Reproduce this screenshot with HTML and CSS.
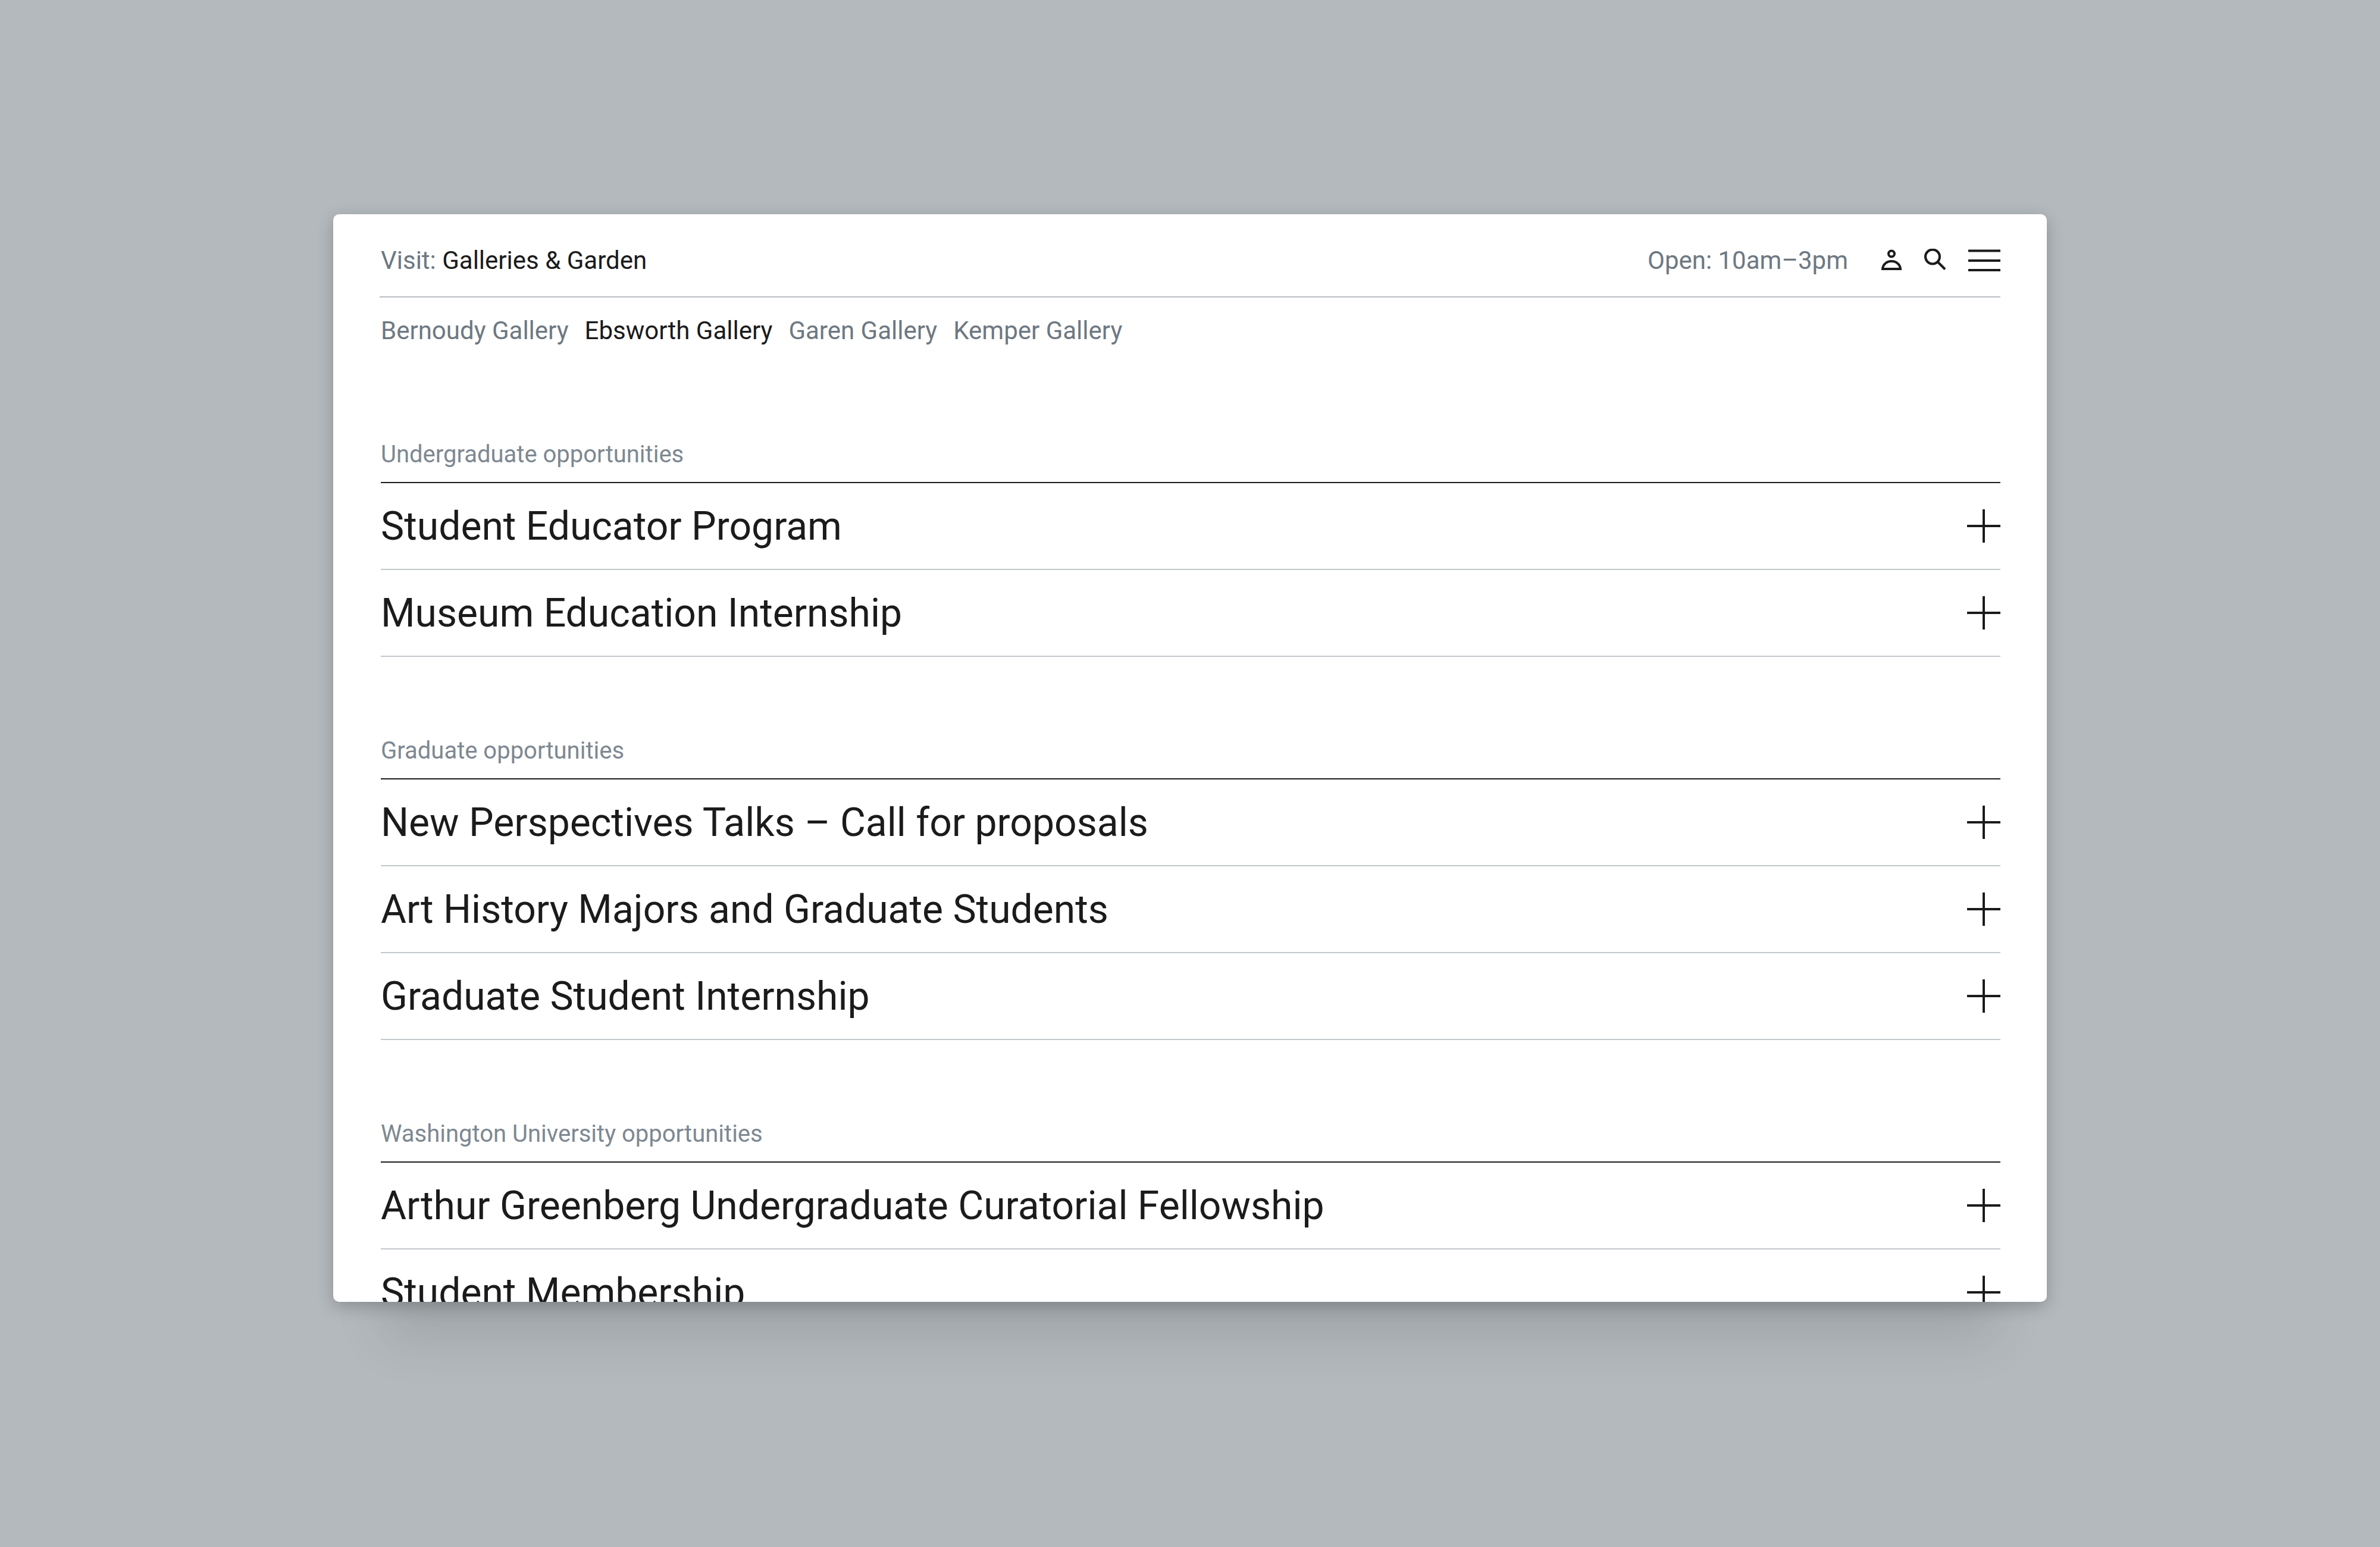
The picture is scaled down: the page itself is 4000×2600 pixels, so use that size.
FILE: index.html
```html
<!DOCTYPE html>
<html lang="en">
<head>
<meta charset="utf-8">
<title>Galleries &amp; Garden</title>
<link rel="stylesheet" href="styles.css">
</head>
<body>
<div class="page">
  <header class="header">
    <div class="topbar">
      <p class="visit"><span class="muted">Visit:</span> <a class="link" href="#galleries">Galleries &amp; Garden</a></p>
      <div class="tools">
        <p class="hours muted">Open: 10am–3pm</p>
        <button class="icon-button" type="button" aria-label="Account">
          <svg width="36" height="40" viewBox="0 0 36 40" fill="none" stroke="currentColor" stroke-width="4">
            <circle cx="17" cy="8.500" r="5"/>
            <path d="M2 34C2.500 26.500 9 21 17 21s14.500 5.500 15 13z"/>
          </svg>
        </button>
        <button class="icon-button" type="button" aria-label="Search">
          <svg width="38" height="40" viewBox="0 0 38 40" fill="none" stroke="currentColor" stroke-width="4">
            <circle cx="14" cy="13.500" r="12"/>
            <path d="M22.500 22 35 34.500"/>
          </svg>
        </button>
        <button class="icon-button" type="button" aria-label="Menu">
          <svg width="54" height="40" viewBox="0 0 54 40" fill="none" stroke="currentColor" stroke-width="4">
            <path d="M0 3.500h54M0 20h54M0 36h54"/>
          </svg>
        </button>
      </div>
    </div>
    <nav class="galleries" id="galleries">
      <a class="link muted" href="#bernoudy">Bernoudy Gallery</a>
      <a class="link" href="#ebsworth" aria-current="page">Ebsworth Gallery</a>
      <a class="link muted" href="#garen">Garen Gallery</a>
      <a class="link muted" href="#kemper">Kemper Gallery</a>
    </nav>
  </header>
  <main class="content">
    <section class="group">
      <h2 class="group-title">Undergraduate opportunities</h2>
      <ul class="list">
        <li><button class="row" type="button" aria-expanded="false"><span class="row-title">Student Educator Program</span><span class="plus"></span></button></li>
        <li><button class="row" type="button" aria-expanded="false"><span class="row-title">Museum Education Internship</span><span class="plus"></span></button></li>
      </ul>
    </section>
    <section class="group">
      <h2 class="group-title">Graduate opportunities</h2>
      <ul class="list">
        <li><button class="row" type="button" aria-expanded="false"><span class="row-title">New Perspectives Talks – Call for proposals</span><span class="plus"></span></button></li>
        <li><button class="row" type="button" aria-expanded="false"><span class="row-title">Art History Majors and Graduate Students</span><span class="plus"></span></button></li>
        <li><button class="row" type="button" aria-expanded="false"><span class="row-title">Graduate Student Internship</span><span class="plus"></span></button></li>
      </ul>
    </section>
    <section class="group">
      <h2 class="group-title">Washington University opportunities</h2>
      <ul class="list">
        <li><button class="row" type="button" aria-expanded="false"><span class="row-title">Arthur Greenberg Undergraduate Curatorial Fellowship</span><span class="plus"></span></button></li>
        <li><button class="row" type="button" aria-expanded="false"><span class="row-title">Student Membership</span><span class="plus"></span></button></li>
      </ul>
    </section>
  </main>
</div>
</body>
</html>
```
FILE: styles.css
```css
* {
  box-sizing: border-box;
  margin: 0;
  padding: 0;
}

body {
  display: flex;
  justify-content: center;
  height: 100vh;
  padding: 360px 0 412px;
  overflow: hidden;
  background: #b4b9bd;
  color: #1b1b1b;
  font-family: Roboto, "Liberation Sans", sans-serif;
  font-size: 42px;
  line-height: 48px;
}

.page {
  width: 72%;
  overflow: hidden;
  border-radius: 10px;
  background: #fff;
  box-shadow:
    0 8px 28px rgba(0, 0, 0, 0.22),
    0 148px 80px -84px rgba(0, 0, 0, 0.1);
}

.header,
.content {
  padding: 0 78px;
}

.topbar {
  display: flex;
  justify-content: space-between;
  align-items: center;
  padding: 54px 0 36px 2px;
  border-bottom: 2px solid #b8bdc1;
}

.muted {
  color: #6e7881;
}

.link {
  text-decoration: none;
}

.link:not(.muted) {
  color: inherit;
}

.tools {
  display: flex;
  align-items: center;
  gap: 36px;
}

.hours {
  margin-right: 20px;
}

.icon-button {
  display: flex;
  border: 0;
  background: none;
  color: inherit;
}

.galleries {
  display: flex;
  gap: 27px;
  padding: 32px 0 0 2px;
}

.content {
  padding-top: 160px;
  padding-left: 80px;
}

.group {
  margin-bottom: 134px;
}

.group-title {
  padding-bottom: 22px;
  border-bottom: 2px solid #1b1b1b;
  color: #7e8891;
  font-size: 40px;
  font-weight: 400;
}

.list {
  list-style: none;
}

.row {
  display: flex;
  justify-content: space-between;
  align-items: center;
  width: 100%;
  height: 146px;
  border: 0;
  border-bottom: 2px solid #c3c8cc;
  background: none;
  color: inherit;
  font: inherit;
  text-align: left;
}

.row-title {
  padding-top: 2px;
  font-size: 66px;
  line-height: 80px;
}

.plus {
  width: 56px;
  height: 56px;
  background:
    linear-gradient(#1b1b1b, #1b1b1b) center / 56px 4px no-repeat,
    linear-gradient(#1b1b1b, #1b1b1b) center / 4px 56px no-repeat;
}
```
